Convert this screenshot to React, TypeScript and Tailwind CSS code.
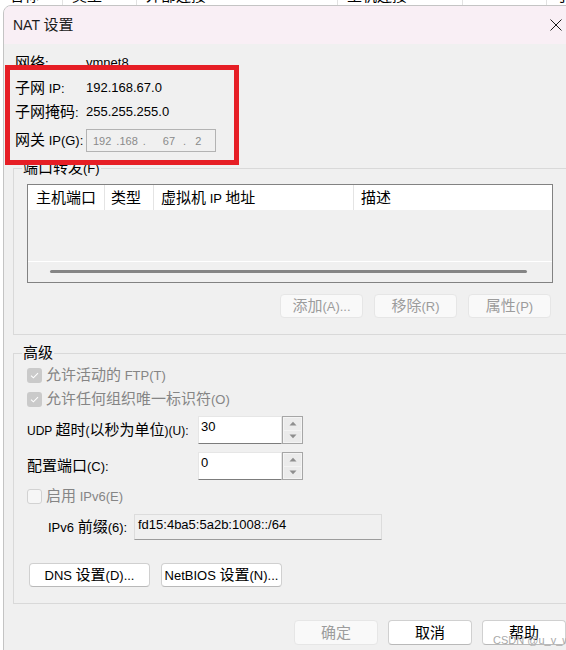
import React from "react";

const CJK = /([\u3000-\u303f\u3400-\u9fff\uff00-\uffef]+)/;

// mixed text: CJK runs a bit larger than Latin runs, like the YaHei UI dialog
function Tx({ s, latin = "text-[13px]" }: { s: string; latin?: string }) {
  const parts = s.split(CJK).filter((p) => p !== "");
  return (
    <>
      {parts.map((p, i) =>
        CJK.test(p) ? (
          <span key={i} className="text-[15px]">
            {p}
          </span>
        ) : (
          <span key={i} className={latin}>
            {p}
          </span>
        )
      )}
    </>
  );
}

function Check({ checked }: { checked?: boolean }) {
  if (!checked) {
    return <span className="w-[15px] h-[15px] shrink-0 rounded-[3px] border border-[#d2d2d2] bg-[#f6f6f6]" />;
  }
  return (
    <span className="w-[15px] h-[15px] shrink-0 rounded-[3px] bg-[#cacaca] flex items-center justify-center">
      <svg width="9" height="7" viewBox="0 0 9 7">
        <path d="M1 3.6 L3.4 5.8 L8 1.2" stroke="#ffffff" strokeWidth="1.1" fill="none" />
      </svg>
    </span>
  );
}

function Spin({ value }: { value: string }) {
  return (
    <div className="flex h-[28px]">
      <div className="w-[84px] h-full bg-white border border-[#e6e6e6] border-b-[#7c7c7c] pl-[2px] leading-[20px] text-[13px] text-black">
        {value}
      </div>
      <div className="w-[21px] h-full border border-[#a6a6a6] bg-[#f4f4f4] p-[1px] flex flex-col gap-[1px]">
        <div className="flex-1 bg-[#ebebeb] flex items-center justify-center">
          <svg width="8" height="5" viewBox="0 0 8 5">
            <path d="M0.5 4.5 L4 0.8 L7.5 4.5 Z" fill="#8e8e8e" />
          </svg>
        </div>
        <div className="flex-1 bg-[#ebebeb] flex items-center justify-center">
          <svg width="8" height="5" viewBox="0 0 8 5">
            <path d="M0.5 0.5 L4 4.2 L7.5 0.5 Z" fill="#8e8e8e" />
          </svg>
        </div>
      </div>
    </div>
  );
}

function Btn({ label, disabled, w = "w-[84px]" }: { label: string; disabled?: boolean; w?: string }) {
  return (
    <div
      className={
        disabled
          ? `${w} h-full rounded-[4px] border border-[#e6e6e6] bg-[#f9f9f9] text-[#9c9c9c] flex items-center justify-center`
          : `${w} h-full rounded-[4px] border border-[#d0d0d0] border-b-[#b9b9b9] bg-white text-black flex items-center justify-center`
      }
    >
      <span className="whitespace-pre">
        <Tx s={label} />
      </span>
    </div>
  );
}

function InfoRow({ label, value, mt }: { label: string; value: string; mt: string }) {
  return (
    <div className={`flex items-center h-[20px] pl-[2px] ${mt}`}>
      <div className="w-[71px]">
        <Tx s={label} />
      </div>
      <div className="text-[13px]">{value}</div>
    </div>
  );
}

const ipParts = [
  { t: "192", c: "ml-[6px]" },
  { t: ".", c: "ml-[5px]" },
  { t: "168", c: "ml-0" },
  { t: ".", c: "ml-[5px]" },
  { t: "67", c: "ml-[17px]" },
  { t: ".", c: "ml-[8px]" },
  { t: "2", c: "ml-[9px]" },
];

const bgCols = [
  { w: "w-[63px]", t: "名称" },
  { w: "w-[74px]", t: "类型" },
  { w: "w-[201px]", t: "外部连接" },
  { w: "w-[125px]", t: "主机连接" },
  { w: "w-[84px]", t: "" },
  { w: "w-[30px]", t: "子网" },
];

export default function App() {
  return (
    <div className="relative w-[566px] h-[650px] overflow-hidden bg-white text-black font-['Liberation_Sans','Noto_Sans_CJK_SC',sans-serif]">
      {/* window behind the dialog */}
      <div className="h-[5px] overflow-hidden">
        <div className="flex -mt-[14px] h-[20px] leading-[20px]">
          {bgCols.map((c, i) => (
            <div key={i} className={`${c.w} shrink-0 border-r border-[#e2e2e2] pl-[9px] text-[15px]`}>
              {c.t}
            </div>
          ))}
        </div>
      </div>

      {/* dialog */}
      <div className="absolute left-[3px] top-[5px] w-[583px] h-[660px] rounded-tl-[8px] border border-[#c4c4c4] bg-[#f0f0f0] overflow-hidden">
        <div className="h-[38px] bg-[#f9eff5] flex items-center justify-between pl-[9px] pr-[23px]">
          <div className="text-[#1b1b1b] whitespace-pre">
            <span className="text-[14px]">NAT </span>
            <span className="text-[15px]">设置</span>
          </div>
          <svg width="12" height="12" viewBox="0 0 12 12">
            <path d="M0.5 0.5 L11.5 11.5 M11.5 0.5 L0.5 11.5" stroke="#1a1a1a" strokeWidth="1" />
          </svg>
        </div>

        <div className="px-[9px] pt-[9px] leading-[20px]">
          <InfoRow label="网络:" value="vmnet8" mt="mt-0" />
          <InfoRow label="子网 IP:" value="192.168.67.0" mt="mt-[5px]" />
          <InfoRow label="子网掩码:" value="255.255.255.0" mt="mt-[4px]" />
          <div className="flex items-center h-[23px] pl-[2px] mt-[7px]">
            <div className="w-[71px]">
              <Tx s="网关 IP(G):" />
            </div>
            <div className="w-[130px] h-full border border-[#b3b3b3] bg-[#f0f0f0] flex items-center text-[11px] text-[#8a8a8a]">
              {ipParts.map((p, i) => (
                <span key={i} className={p.c}>
                  {p.t}
                </span>
              ))}
            </div>
          </div>

          {/* 端口转发 */}
          <fieldset className="mt-[6px] border border-[#d9d9d9] pb-[16px]">
            <legend className="ml-[8px] px-[1px] h-[20px] leading-[20px]">
              <Tx s="端口转发(F)" />
            </legend>
            <div className="pl-[13px]">
              <div className="mt-[6px] w-[526px] h-[99px] border border-[#828282] flex flex-col">
                <div className="h-[25px] bg-white flex">
                  <div className="w-[77px] border-r border-[#e4e4e4] pl-[8px] text-[15px] leading-[25px]">主机端口</div>
                  <div className="w-[49px] border-r border-[#e4e4e4] pl-[6px] text-[15px] leading-[25px]">类型</div>
                  <div className="w-[200px] border-r border-[#e4e4e4] pl-[7px] leading-[25px]">
                    <Tx s="虚拟机 IP 地址" />
                  </div>
                  <div className="flex-1 pl-[7px] text-[15px] leading-[25px]">描述</div>
                </div>
                <div className="h-[51px]" />
                <div className="h-[1px] bg-white" />
                <div className="flex-1 pt-[8px]">
                  <div className="ml-[22px] w-[477px] h-[3px] rounded-full bg-[#858585]" />
                </div>
              </div>
              <div className="mt-[11px] w-[526px] h-[24px] flex justify-end gap-[11px] pr-[2px]">
                <Btn label="添加(A)..." disabled w="w-[83px]" />
                <Btn label="移除(R)" disabled w="w-[83px]" />
                <Btn label="属性(P)" disabled w="w-[83px]" />
              </div>
            </div>
          </fieldset>

          {/* 高级 */}
          <fieldset className="mt-[8px] border border-[#d9d9d9] pb-[16px]">
            <legend className="ml-[8px] px-[1px] h-[20px] leading-[20px] text-[15px]">高级</legend>
            <div className="pl-[13px]">
              <div className="mt-[2px] h-[20px] flex items-center gap-[4px] text-[#858585]">
                <Check checked />
                <span className="whitespace-pre">
                  <Tx s="允许活动的 FTP(T)" />
                </span>
              </div>
              <div className="mt-[4px] h-[20px] flex items-center gap-[4px] text-[#858585]">
                <Check checked />
                <span>
                  <Tx s="允许任何组织唯一标识符(O)" />
                </span>
              </div>
              <div className="mt-[7px] flex items-center">
                <div className="w-[171px] whitespace-pre">
                  <Tx s="UDP 超时(以秒为单位)(U):" latin="text-[12px]" />
                </div>
                <Spin value="30" />
              </div>
              <div className="mt-[8px] flex items-center">
                <div className="w-[171px]">
                  <Tx s="配置端口(C):" />
                </div>
                <Spin value="0" />
              </div>
              <div className="mt-[6px] h-[20px] flex items-center gap-[4px] text-[#858585]">
                <Check />
                <span className="whitespace-pre">
                  <Tx s="启用 IPv6(E)" />
                </span>
              </div>
              <div className="mt-[8px] flex items-center pl-[21px]">
                <div className="w-[86px] whitespace-pre">
                  <Tx s="IPv6 前缀(6):" />
                </div>
                <div className="w-[248px] h-[26px] border border-[#dcdcdc] border-b-[#9c9c9c] bg-[#f0f0f0] pl-[3px] text-[13px] leading-[20px]">
                  fd15:4ba5:5a2b:1008::/64
                </div>
              </div>
              <div className="mt-[23px] h-[24px] flex gap-[11px] pl-[2px]">
                <Btn label="DNS 设置(D)..." w="w-[121px]" />
                <Btn label="NetBIOS 设置(N)..." w="w-[121px]" />
              </div>
            </div>
          </fieldset>

          <div className="mt-[16px] h-[25px] flex justify-end gap-[10px] pr-[10px]">
            <Btn label="确定" disabled />
            <Btn label="取消" />
            <Btn label="帮助" />
          </div>
        </div>
      </div>

      {/* red annotation box */}
      <div className="absolute left-[5px] top-[65px] w-[234px] h-[100px] border-[5px] border-[#e61e25]" />

      {/* watermark */}
      <div className="absolute left-[493px] top-[633px] whitespace-nowrap text-[11px] leading-[14px] text-[#a9a9a9]">CSDN @u_v_w</div>
    </div>
  );
}
